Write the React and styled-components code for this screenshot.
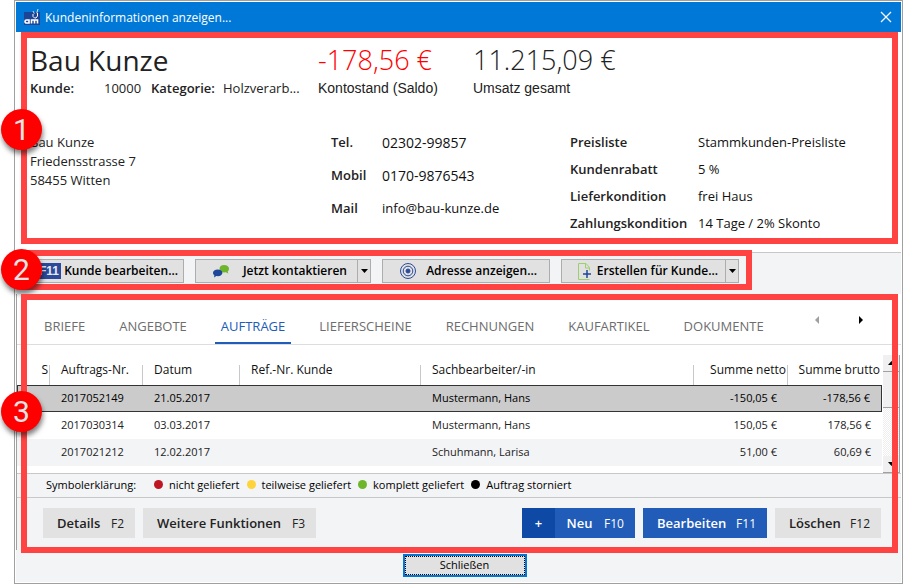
import React, { useState } from "react";
import styled, { createGlobalStyle, css } from "styled-components";

const GlobalStyle = createGlobalStyle`
  * {
    box-sizing: border-box;
  }

  body {
    margin: 0;
    background: #fff;
    color: #222;
    font-family: "Open Sans", "Noto Sans", sans-serif;
    font-size: 13px;
  }

  button {
    margin: 0;
    padding: 0;
    border: 0;
    background: none;
    color: inherit;
    font-family: inherit;
  }
`;

const Dialog = styled.div`
  display: flex;
  flex-direction: column;
  min-height: 100vh;
  margin-left: 14px;
  padding: 1px;
  border: 1px solid #a0a0a0;
  background: #fff;
`;

const TitleBar = styled.header`
  display: flex;
  align-items: center;
  gap: 5px;
  height: 30px;
  padding: 0 8px;
  background: #0078d7;
  color: #fff;
`;

const Title = styled.h1`
  flex: 1;
  margin: 0;
  font-size: 12px;
  font-weight: 400;
`;

const CloseButton = styled.button`
  display: flex;
  padding: 1px;
`;

/* numbered highlights that lie over the sections */

const Frame = styled.div`
  position: absolute;
  inset: ${(p) => p.$inset};
  z-index: 1;
  border: 6px solid #ff4343;
  pointer-events: none;
`;

const Badge = styled.span`
  position: absolute;
  top: ${(p) => p.$top};
  left: -26px;
  width: 41px;
  height: 41px;
  border-radius: 50%;
  background: #fe0000;
  box-shadow: 1px 4px 5px rgba(0, 0, 0, 0.5);
  color: #e4e4e4;
  font: 30px/41px Roboto, Arial, sans-serif;
  text-align: center;
`;

const Marker = ({ number, inset, top }) => (
  <Frame $inset={inset}>
    <Badge $top={top}>{number}</Badge>
  </Frame>
);

/* customer */

const Customer = styled.section`
  position: relative;
  height: 220px;
  padding: 8px 15px 0 14px;
`;

const Summary = styled.div`
  display: grid;
  grid-template-columns: 288fr 155fr 413fr;
`;

const Headline = styled.div`
  height: 40px;
  color: ${(p) => (p.$negative ? "#f00" : "#222")};
  font-size: ${(p) => (p.$light ? "27px" : "28px")};
  font-weight: ${(p) => (p.$light ? 300 : 400)};
  line-height: 40px;
  white-space: nowrap;
`;

const Caption = styled.div`
  font: 14px/16px "Liberation Sans", Arial, sans-serif;
`;

const Facts = styled.div`
  display: grid;
  grid-template-columns: 74px 47px 72px 1fr;
  line-height: 16px;

  b {
    font-weight: 600;
  }
`;

const Details = styled.div`
  display: grid;
  grid-template-columns: 301fr 239fr 316fr;
  margin-top: 37px;
`;

const Address = styled.address`
  font-style: normal;
  line-height: 19px;
`;

const Pairs = styled.dl`
  display: grid;
  grid-template-columns: ${(p) => p.$label} 1fr;
  grid-auto-rows: ${(p) => p.$row};
  margin: 0;
  line-height: 19px;

  dt {
    font-weight: 600;
  }

  dd {
    margin: 0;
    color: #111;
  }
`;

const MailLink = styled.a`
  color: inherit;
  text-decoration: none;
`;

const PhoneLink = styled(MailLink)`
  font-size: 14px;
`;

/* toolbar */

const Toolbar = styled.section`
  position: relative;
  display: flex;
  height: 42px;
  border-top: 1px solid #c8c8c8;
  background: #f3f4f6;
`;

const ToolGroup = styled.div`
  position: relative;
  display: flex;
  gap: 11px;
  padding: 6px 13px 11px 14px;
`;

const Split = styled.div`
  display: flex;
`;

const ToolButton = styled.button`
  display: flex;
  align-items: center;
  justify-content: space-between;
  width: ${(p) => p.$width};
  height: 24px;
  padding: 0 ${(p) => p.$end || "10px"} 0 ${(p) => p.$start || "16px"};
  border: 1px solid #adadad;
  background: #e1e1e1;
  color: #000;
  font-size: 12px;
  font-weight: 600;
  line-height: 20px;
  white-space: nowrap;
`;

const ArrowButton = styled.button`
  display: flex;
  align-items: center;
  justify-content: center;
  width: 14px;
  height: 24px;
  margin-left: -1px;
  border: 1px solid #adadad;
  background: #e1e1e1;
`;

const KeyChip = styled.span`
  padding: 0 2px;
  background: #2b4a9b;
  color: #e6eaf4;
  font: bold 12px/16px "Liberation Sans", Arial, sans-serif;
`;

/* orders */

const Orders = styled.section`
  position: relative;
  border-left: 1px solid #a0a0a0;
`;

const Tabs = styled.nav`
  display: flex;
  align-items: flex-end;
  height: 51px;
  padding-left: 21px;
  border-bottom: 1px solid #ddd;
`;

const Tab = styled.button`
  height: 36px;
  margin-right: 22px;
  padding: 0 6px;
  color: #6d6d6d;
  font-size: 13px;
  line-height: 36px;

  ${(p) =>
    p.$active &&
    css`
      box-shadow: inset 0 -2px #215cb8;
      color: #215cb8;
    `}
`;

const TabArrows = styled.div`
  display: flex;
  gap: 40px;
  margin-left: auto;
  padding: 0 38px 20px 0;

  button {
    display: flex;
  }
`;

const TableArea = styled.div`
  display: flex;
  height: 128px;
  padding-top: 10px;
`;

const Table = styled.table`
  flex: 1;
  height: 111px;
  table-layout: fixed;
  border-collapse: separate;
  border-spacing: 0;
  font-size: 11px;
`;

const Th = styled.th`
  height: 30px;
  padding: ${(p) => (p.$right ? "0 2px 2px 0" : "0 0 2px 11px")};
  background: linear-gradient(#c8c8c8, #c8c8c8) right bottom / 1px 20px no-repeat;
  color: #111;
  font-size: 12px;
  font-weight: 400;
  text-align: ${(p) => (p.$right ? "right" : "left")};
  white-space: nowrap;

  &:last-child {
    background: none;
  }
`;

const Row = styled.tr`
  height: 27px;
  background: ${(p) => (p.$selected ? "#cbcbcb" : "#fff")};
  color: ${(p) => (p.$selected ? "#000" : "#222")};

  &:last-child {
    background: #f3f4f6;
  }

  td {
    padding: 0 11px 2px;
    border: ${(p) => (p.$selected ? "solid #333" : "none")};
    border-width: 1px 0;
    white-space: nowrap;
  }

  td:first-child {
    border-left-width: 1px;
  }

  td:last-child {
    border-right-width: 1px;
  }
`;

const Amount = styled.td`
  text-align: right;
`;

const Scrollbar = styled.div`
  display: flex;
  flex-direction: column;
  width: 17px;
  margin: 0 1px;
  border-right: 1px solid #a0a0a0;
  background: repeating-conic-gradient(#eee 0 25%, #fff 0 50%) 0 0 / 2px 2px;
`;

const ScrollButton = styled.button`
  display: flex;
  align-items: center;
  justify-content: center;
  height: 17px;
  border-bottom: 1px solid #a0a0a0;
  background: #f0f0f0;
`;

const Thumb = styled.div`
  height: 36px;
  margin-bottom: auto;
  border-bottom: 1px solid #a0a0a0;
  background: #f0f0f0;
`;

const Legend = styled.div`
  display: flex;
  align-items: center;
  height: 25px;
  padding: 0 0 2px 29px;
  border: solid #c8c8c8;
  border-width: 1px 0;
  background: #f3f4f6;
  color: #000;
  font-size: 11px;
`;

const LegendTitle = styled.span`
  width: 108px;
`;

const LegendItem = styled.span`
  display: flex;
  align-items: center;
  gap: 6px;
  margin-right: 7px;

  &::before {
    content: "";
    width: 9px;
    height: 9px;
    border-radius: 50%;
    background: ${(p) => p.$color};
  }
`;

const Actions = styled.div`
  display: flex;
  gap: 8px;
  height: 52px;
  padding: 10px 20px 12px 26px;
  background: #f3f4f6;
`;

const ActionButton = styled.button`
  display: flex;
  align-items: center;
  justify-content: space-between;
  width: ${(p) => p.$width};
  height: 30px;
  margin-left: ${(p) => (p.$push ? "auto" : "0")};
  padding: 0 ${(p) => (p.$plus ? "11px 0 0" : "11px 0 14px")};
  background: ${(p) => (p.$primary ? "#215cb8" : "#e2e2e2")};
  color: ${(p) => (p.$primary ? "#fff" : "#222")};
  font-size: 13px;
  font-weight: 600;
  white-space: nowrap;

  kbd {
    font-family: inherit;
    font-size: 12px;
    font-weight: 400;
  }
`;

const Plus = styled.span`
  width: 33px;
  background: #0f49a6;
  line-height: 30px;
`;

const Footer = styled.footer`
  display: flex;
  flex: 1;
  justify-content: center;
  padding: 4px 0 0 12px;
  background: #f3f4f6;
`;

const DefaultButton = styled.button`
  width: 124px;
  height: 23px;
  padding-bottom: 2px;
  border: 2px solid #0078d7;
  outline: 1px dotted #000;
  outline-offset: -3px;
  background: #e1e1e1;
  color: #000;
  font-size: 11px;
`;

const AppIcon = () => (
  <svg width="16" height="16" viewBox="0 0 16 16">
    <rect y="3" width="16" height="13" fill="#1d4596" />
    <path d="M9 2l1.500 3M14 0l-1.500 5" stroke="#cfe0f5" fill="none" />
    <path d="M9 5v2.500l1.500 1.500h1.500l1.500-2V4" fill="#1d4596" stroke="#fff" />
    <path d="M5 11H2.500a1.500 1.500 0 0 0 0 3H5zM7.500 14.500V11h6v3.500M10.500 11v3.500" fill="none" stroke="#fff" strokeWidth="1.600" />
  </svg>
);

const CrossIcon = () => (
  <svg width="12" height="12" viewBox="0 0 12 12">
    <path d="M1 1l10 10M11 1L1 11" stroke="#fff" strokeWidth="1.200" />
  </svg>
);

const ChatIcon = () => (
  <svg width="16" height="13" viewBox="0 0 16 13">
    <path d="M11 0c3 0 5 1.500 5 3.700 0 1.200-.5 2-1.300 2.700l.6 2.100-2.500-1.200c-3.800.5-6.300-.9-6.300-3.400C6.500 1.600 8.300 0 11 0z" fill="#6fb52c" />
    <path d="M4.700 4.500c2.800 0 4.700 1.400 4.700 3.300s-1.900 3.400-4.700 3.400c-.5 0-1 0-1.400-.1L1 12.600l.4-2.200C.5 9.700 0 8.800 0 7.800c0-1.900 1.900-3.300 4.700-3.300z" fill="#1f4699" />
  </svg>
);

const TargetIcon = () => (
  <svg width="16" height="16" viewBox="0 0 16 16" fill="none" stroke="#2b4a9b">
    <circle cx="8" cy="8" r="7.500" />
    <circle cx="8" cy="8" r="4.800" />
    <circle cx="8" cy="8" r="2" fill="#2b4a9b" />
  </svg>
);

const NewFileIcon = () => (
  <svg width="14" height="17" viewBox="0 0 14 17" fill="none">
    <path d="M11.500 16.500H.5V.5h7.500l3.500 4v3M7.500 1v4h4" stroke="#9bd06a" />
    <path d="M9 7v8M5 11h8" stroke="#1f4699" strokeWidth="1.500" />
  </svg>
);

const Arrow = ({ direction = "down", color = "#000" }) => {
  const points = {
    down: "0,0 7,0 3.5,4",
    up: "0,4 7,4 3.5,0",
    left: "4,0 4,8 0,4",
    right: "0,0 0,8 4,4",
  };
  const upright = direction === "down" || direction === "up";
  return (
    <svg width={upright ? 7 : 4} height={upright ? 4 : 8}>
      <polygon points={points[direction]} fill={color} />
    </svg>
  );
};

const tabs = [
  "BRIEFE",
  "ANGEBOTE",
  "AUFTRÄGE",
  "LIEFERSCHEINE",
  "RECHNUNGEN",
  "KAUFARTIKEL",
  "DOKUMENTE",
];

const orders = [
  { nr: "2017052149", date: "21.05.2017", clerk: "Mustermann, Hans", net: "-150,05 €", gross: "-178,56 €" },
  { nr: "2017030314", date: "03.03.2017", clerk: "Mustermann, Hans", net: "150,05 €", gross: "178,56 €" },
  { nr: "2017021212", date: "12.02.2017", clerk: "Schuhmann, Larisa", net: "51,00 €", gross: "60,69 €" },
];

const states = [
  { color: "#be1622", text: "nicht geliefert" },
  { color: "#ffd43b", text: "teilweise geliefert" },
  { color: "#6fb52c", text: "komplett geliefert" },
  { color: "#000", text: "Auftrag storniert" },
];

const App = () => {
  const [activeTab, setActiveTab] = useState("AUFTRÄGE");
  const [selected, setSelected] = useState("2017052149");

  return (
    <>
      <GlobalStyle />
      <Dialog>
        <TitleBar>
          <AppIcon />
          <Title>Kundeninformationen anzeigen...</Title>
          <CloseButton aria-label="Schließen">
            <CrossIcon />
          </CloseButton>
        </TitleBar>

        <Customer>
          <Marker number={1} inset="0 3px 8px 5px" top="71px" />
          <Summary>
            <div>
              <Headline>Bau Kunze</Headline>
              <Facts>
                <b>Kunde:</b>
                <span>10000</span>
                <b>Kategorie:</b>
                <span>Holzverarb...</span>
              </Facts>
            </div>
            <div>
              <Headline $negative $light>-178,56 €</Headline>
              <Caption>Kontostand (Saldo)</Caption>
            </div>
            <div>
              <Headline $light>11.215,09 €</Headline>
              <Caption>Umsatz gesamt</Caption>
            </div>
          </Summary>
          <Details>
            <Address>
              Bau Kunze
              <br />
              Friedensstrasse 7
              <br />
              58455 Witten
            </Address>
            <Pairs $label="51px" $row="33px">
              <dt>Tel.</dt>
              <dd>
                <PhoneLink href="tel:0230299857">02302-99857</PhoneLink>
              </dd>
              <dt>Mobil</dt>
              <dd>
                <PhoneLink href="tel:01709876543">0170-9876543</PhoneLink>
              </dd>
              <dt>Mail</dt>
              <dd>
                <MailLink href="mailto:info@bau-kunze.de">info@bau-kunze.de</MailLink>
              </dd>
            </Pairs>
            <Pairs $label="128px" $row="27px">
              <dt>Preisliste</dt>
              <dd>Stammkunden-Preisliste</dd>
              <dt>Kundenrabatt</dt>
              <dd>5 %</dd>
              <dt>Lieferkondition</dt>
              <dd>frei Haus</dd>
              <dt>Zahlungskondition</dt>
              <dd>14 Tage / 2% Skonto</dd>
            </Pairs>
          </Details>
        </Customer>

        <Toolbar>
          <ToolGroup>
            <Marker number={2} inset="-3px 0 4px 5px" top="-7px" />
            <ToolButton $width="154px" $start="6px" $end="5px">
              <KeyChip>F11</KeyChip>
              Kunde bearbeiten...
            </ToolButton>
            <Split>
              <ToolButton $width="163px" $start="17px">
                <ChatIcon />
                Jetzt kontaktieren
              </ToolButton>
              <ArrowButton aria-label="Kontaktarten">
                <Arrow />
              </ArrowButton>
            </Split>
            <ToolButton $width="168px" $end="12px" $start="17px">
              <TargetIcon />
              Adresse anzeigen...
            </ToolButton>
            <Split>
              <ToolButton $width="165px" $end="7px">
                <NewFileIcon />
                Erstellen für Kunde...
              </ToolButton>
              <ArrowButton aria-label="Belegarten">
                <Arrow />
              </ArrowButton>
            </Split>
          </ToolGroup>
        </Toolbar>

        <Orders>
          <Marker number={3} inset="0 3px -3px 4px" top="91px" />
          <Tabs>
            {tabs.map((tab) => (
              <Tab key={tab} $active={tab === activeTab} onClick={() => setActiveTab(tab)}>
                {tab}
              </Tab>
            ))}
            <TabArrows>
              <button aria-label="Zurück">
                <Arrow direction="left" color="#a0a0a0" />
              </button>
              <button aria-label="Weiter">
                <Arrow direction="right" />
              </button>
            </TabArrows>
          </Tabs>
          <TableArea>
            <Table>
              <colgroup>
                <col width="33" />
                <col width="93" />
                <col width="97" />
                <col width="181" />
                <col />
                <col width="94" />
                <col width="94" />
              </colgroup>
              <thead>
                <tr>
                  <Th $right>S</Th>
                  <Th>Auftrags-Nr.</Th>
                  <Th>Datum</Th>
                  <Th>Ref.-Nr. Kunde</Th>
                  <Th>Sachbearbeiter/-in</Th>
                  <Th $right>Summe netto</Th>
                  <Th $right>Summe brutto</Th>
                </tr>
              </thead>
              <tbody>
                {orders.map((order) => (
                  <Row
                    key={order.nr}
                    $selected={order.nr === selected}
                    onClick={() => setSelected(order.nr)}
                  >
                    <td />
                    <td>{order.nr}</td>
                    <td>{order.date}</td>
                    <td />
                    <td>{order.clerk}</td>
                    <Amount>{order.net}</Amount>
                    <Amount>{order.gross}</Amount>
                  </Row>
                ))}
              </tbody>
            </Table>
            <Scrollbar>
              <ScrollButton aria-label="Nach oben">
                <Arrow direction="up" />
              </ScrollButton>
              <Thumb />
              <ScrollButton aria-label="Nach unten">
                <Arrow />
              </ScrollButton>
            </Scrollbar>
          </TableArea>
          <Legend>
            <LegendTitle>Symbolerklärung:</LegendTitle>
            {states.map((state) => (
              <LegendItem key={state.text} $color={state.color}>
                {state.text}
              </LegendItem>
            ))}
          </Legend>
          <Actions>
            <ActionButton $width="92px">
              Details <kbd>F2</kbd>
            </ActionButton>
            <ActionButton $width="173px">
              Weitere Funktionen <kbd>F3</kbd>
            </ActionButton>
            <ActionButton $width="113px" $primary $plus $push>
              <Plus>+</Plus>
              Neu <kbd>F10</kbd>
            </ActionButton>
            <ActionButton $width="124px" $primary>
              Bearbeiten <kbd>F11</kbd>
            </ActionButton>
            <ActionButton $width="106px">
              Löschen <kbd>F12</kbd>
            </ActionButton>
          </Actions>
        </Orders>

        <Footer>
          <DefaultButton>Schließen</DefaultButton>
        </Footer>
      </Dialog>
    </>
  );
};

export default App;
